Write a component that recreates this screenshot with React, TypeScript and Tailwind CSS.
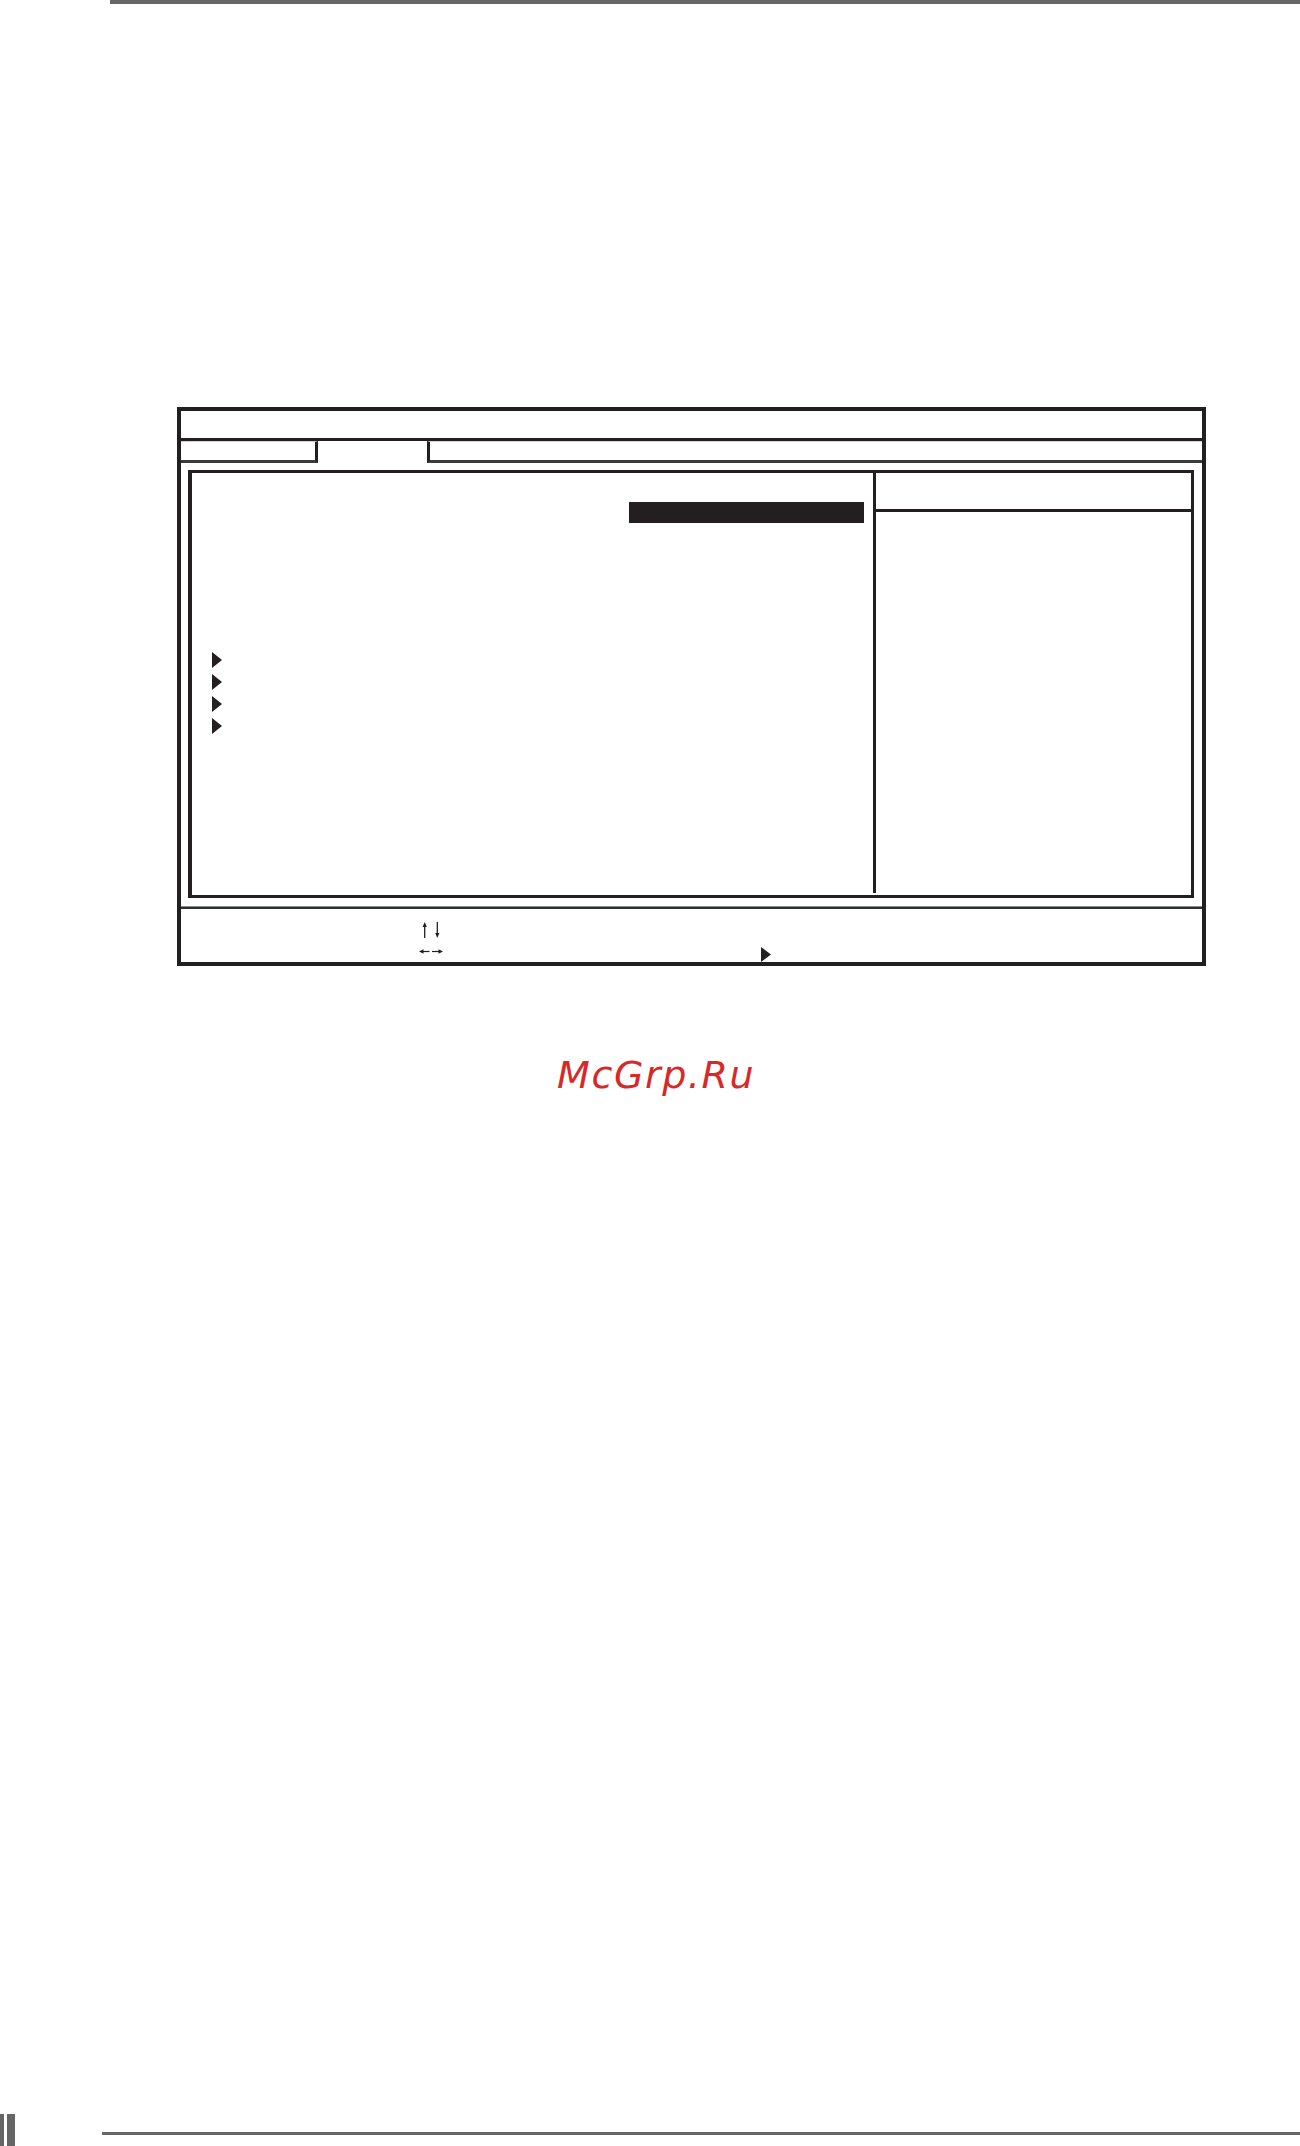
import React from 'react';

const Marker: React.FC = () => (
  <svg width="10" height="16" viewBox="0 0 10 16" className="block">
    <polygon points="0,0 10,8 0,16" fill="#231f20" />
  </svg>
);

const UpDown: React.FC = () => (
  <svg width="22" height="16" viewBox="0 0 22 16" className="block">
    <line x1="4.7" y1="4" x2="4.7" y2="16" stroke="#231f20" strokeWidth="1.3" />
    <polygon points="2.6,5 4.7,0 6.8,5" fill="#231f20" />
    <line x1="17.3" y1="0" x2="17.3" y2="12" stroke="#231f20" strokeWidth="1.3" />
    <polygon points="15.2,11 17.3,16 19.4,11" fill="#231f20" />
  </svg>
);

const LeftRight: React.FC = () => (
  <svg width="26" height="7" viewBox="0 0 26 7" className="block">
    <polygon points="1,3.5 5.5,1.3 5.5,5.7" fill="#231f20" />
    <line x1="5" y1="3.5" x2="11.5" y2="3.5" stroke="#231f20" strokeWidth="1.2" />
    <line x1="14" y1="3.5" x2="21" y2="3.5" stroke="#231f20" strokeWidth="1.2" />
    <polygon points="20.5,1.3 25,3.5 20.5,5.7" fill="#231f20" />
  </svg>
);

export default function App() {
  return (
    <div className="h-[2146px] w-[1300px] bg-white flex flex-col font-['DejaVu_Sans',sans-serif]">
      {/* page header rule */}
      <div className="ml-[110px] h-[4px] bg-[#666666]" />

      {/* BIOS screen frame */}
      <div className="ml-[177px] mt-[403px] w-[1029px] border-[4px] border-[#231f20] flex flex-col">
        <div className="h-[27px]" />

        {/* tab row */}
        <div className="flex border-t-[3px] border-[#231f20]">
          <div className="w-[137px] h-[22px] border-r-[3px] border-b-[3px] border-r-[#231f20] border-b-[#3a3a3a] border-t border-t-[#d4d4d4]" />
          <div className="w-[109px] h-[22px]" />
          <div className="flex-1 h-[22px] border-l-[3px] border-b-[3px] border-l-[#231f20] border-b-[#3a3a3a] border-t border-t-[#d4d4d4]" />
        </div>

        {/* main panel */}
        <div className="ml-[7px] mr-[8px] mt-[7px] h-[428px] border-[3px] border-l-[4px] border-[#231f20] flex">
          <div className="w-[681px] flex flex-col">
            <div className="mt-[29px] ml-[437px] w-[235px] h-[21px] bg-[#231f20]" />
            <div className="mt-[129px] pl-[20px] flex flex-col gap-[6px]">
              <Marker />
              <Marker />
              <Marker />
              <Marker />
            </div>
          </div>
          <div className="w-[3px] mb-[2px] bg-[#231f20]" />
          <div className="flex-1 flex flex-col">
            <div className="h-[39px] border-b-[3px] border-[#231f20]" />
          </div>
        </div>

        {/* key help footer */}
        <div className="mt-[8px] h-[3px] bg-[#2e2e2e] border-t border-[#8a8a8a]" />
        <div className="h-[53px] flex flex-col">
          <div className="pt-[13px] pl-[239px]">
            <UpDown />
          </div>
          <div className="flex-1 flex items-end pl-[237px]">
            <div className="mb-[7px]">
              <LeftRight />
            </div>
            <div className="ml-[317px]">
              <svg width="10" height="15" viewBox="0 0 10 15" className="block">
                <polygon points="0,0 10,7.5 0,15" fill="#231f20" />
              </svg>
            </div>
          </div>
        </div>
      </div>

      {/* watermark */}
      <div className="mt-[90px] ml-[557px] text-[38px] leading-none italic tracking-[1.6px] text-[#d62a2a]">
        McGrp.Ru
      </div>

      {/* page footer */}
      <div className="mt-auto h-[32px] flex">
        <div className="w-[4px] bg-[#666666]" />
        <div className="ml-[3px] w-[8px] bg-[#666666]" />
        <div className="ml-[87px] mt-[18px] flex-1 h-[3px] bg-[#666666]" />
      </div>
    </div>
  );
}
